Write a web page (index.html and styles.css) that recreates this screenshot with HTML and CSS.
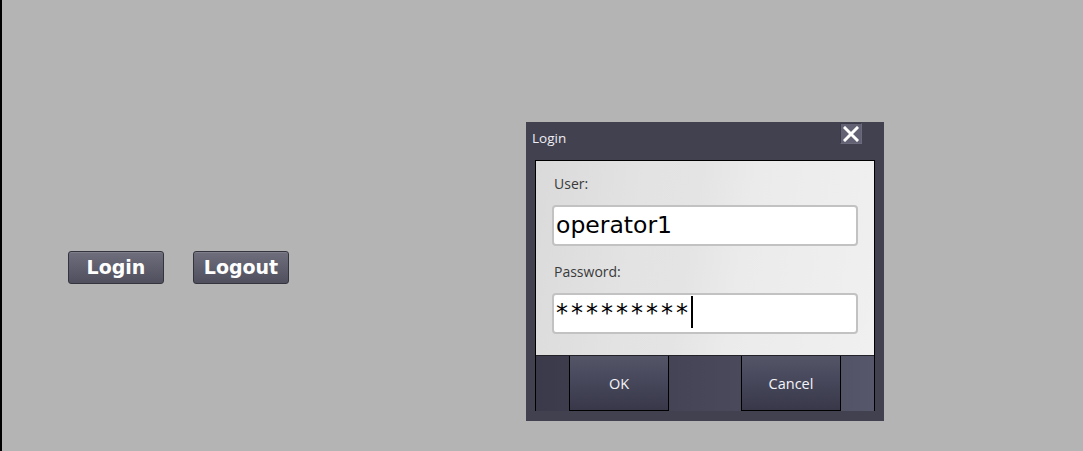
FILE: index.html
```html
<!DOCTYPE html>
<html>
<head>
<meta charset="utf-8">
<link rel="stylesheet" href="styles.css">
</head>
<body>
<div class="screen">
  <div class="actions">
    <button class="hmi-btn">Login</button>
    <button class="hmi-btn">Logout</button>
  </div>

  <div class="dialog">
    <div class="titlebar">
      <span class="title">Login</span>
      <span class="close">
        <svg width="16" height="16" viewBox="0 0 16 16"><path d="M2 2 L14 14 M14 2 L2 14" stroke="#ffffff" stroke-width="3" stroke-linecap="square"/></svg>
      </span>
    </div>
    <div class="frame">
      <div class="panel">
        <div class="label">User:</div>
        <div class="field">operator1</div>
        <div class="label label-2">Password:</div>
        <div class="field"><span class="stars">*********</span><span class="caret"></span></div>
      </div>
      <div class="bar">
        <div class="strip"></div>
        <button class="dlg-btn">OK</button>
        <div class="gap"></div>
        <button class="dlg-btn">Cancel</button>
        <div class="strip"></div>
      </div>
    </div>
  </div>
</div>
</body>
</html>
```

FILE: styles.css
```css
html, body {
  margin: 0;
  padding: 0;
  height: 100%;
}
body {
  background: #b4b4b4;
  overflow: hidden;
}
.screen {
  position: relative;
  height: 451px;
  border-left: 2px solid #000;
  box-sizing: border-box;
}
.actions {
  display: flex;
  gap: 29px;
  padding: 251px 0 0 66px;
}
.hmi-btn {
  width: 96px;
  height: 33px;
  margin: 0;
  padding: 0;
  border: 1px solid #34343e;
  border-radius: 3px;
  background: linear-gradient(#6e6e7c, #4f4f5d);
  box-shadow: inset 0 1px 0 rgba(255,255,255,0.12);
  color: #fff;
  font-family: "DejaVu Sans", Verdana, sans-serif;
  font-weight: bold;
  font-size: 19px;
  line-height: 31px;
  text-align: center;
}
.dialog {
  position: absolute;
  left: 524px;
  top: 122px;
  width: 358px;
  height: 299px;
  background: #41414f;
  box-sizing: border-box;
  padding: 0 9px 10px 9px;
  display: flex;
  flex-direction: column;
}
.titlebar {
  height: 38px;
  display: flex;
  justify-content: space-between;
  align-items: flex-start;
  margin: 0 13px 0 -3px;
}
.title {
  margin-top: 7px;
  font-family: "Open Sans", sans-serif;
  font-size: 13.5px;
  color: #eeeef4;
}
.close {
  margin-top: 1px;
  width: 22px;
  height: 21px;
  box-sizing: border-box;
  background: #626274;
  border: 1px solid #3a3a48;
  border-right-color: #6a6a7c;
  border-bottom-color: #6a6a7c;
  display: flex;
  align-items: center;
  justify-content: center;
}
.close svg { display: block; }
.frame {
  flex: 1;
  border: 1px solid #000;
  border-bottom: none;
  display: flex;
  flex-direction: column;
}
.panel {
  padding: 13px 16px 21px 16px;
  background: linear-gradient(100deg, #dadada 0%, #e3e3e3 30%, #e4e4e4 45%, #ebebeb 60%, #f0f0f0 100%);
  display: flex;
  flex-direction: column;
}
.label {
  font-family: "Open Sans", sans-serif;
  font-size: 14px;
  line-height: 19px;
  color: #3a3a3a;
  padding-left: 2px;
  margin-bottom: 12px;
}
.label-2 {
  margin-top: 16px;
}
.field {
  height: 41px;
  box-sizing: border-box;
  border: 2px solid #c2c2c2;
  border-radius: 4px;
  background: #fff;
  padding-left: 2px;
  font-family: "DejaVu Sans", Verdana, sans-serif;
  font-size: 23.5px;
  line-height: 37px;
  color: #000;
  display: flex;
  align-items: flex-start;
}
.stars {
  font-size: 24px;
  letter-spacing: 3px;
  line-height: 37px;
}
.caret {
  width: 2px;
  height: 32px;
  margin-top: 1px;
  margin-left: 0px;
  background: #000;
}
.bar {
  flex: 1;
  display: flex;
  background: linear-gradient(90deg, #3a3a4b 0%, #444456 40%, #4c4c5e 70%, #57576b 100%);
  border-top: 1px solid #222228;
}
.strip {
  width: 33px;
}
.gap {
  width: 72px;
}
.dlg-btn {
  width: 100px;
  margin: 0;
  padding: 0;
  border: 1px solid #000;
  border-top: none;
  background: linear-gradient(#555568, #46465a 50%, #383849);
  color: #f4f4f8;
  font-family: "Open Sans", sans-serif;
  font-size: 14.5px;
  text-align: center;
}
```
